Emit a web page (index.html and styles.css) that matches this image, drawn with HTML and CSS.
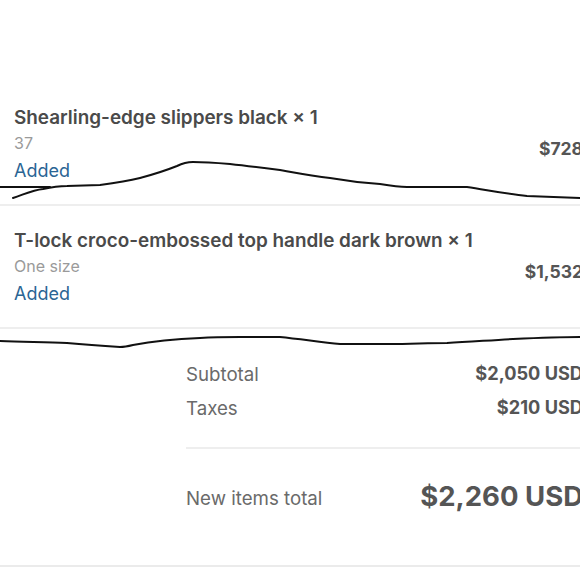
FILE: index.html
```html
<!DOCTYPE html>
<html lang="en">
<head>
<meta charset="utf-8">
<title>New items</title>
<link rel="stylesheet" href="styles.css">
</head>
<body>
<div class="page">
  <div class="items">
    <div class="item">
      <div class="info">
        <div class="title">Shearling-edge slippers black × 1</div>
        <div class="variant">37</div>
        <div class="status">Added</div>
      </div>
      <div class="price">$728</div>
    </div>
    <div class="item">
      <div class="info">
        <div class="title">T-lock croco-embossed top handle dark brown × 1</div>
        <div class="variant">One size</div>
        <div class="status">Added</div>
      </div>
      <div class="price">$1,532</div>
    </div>
  </div>
  <div class="summary">
    <div class="line">
      <span class="label">Subtotal</span>
      <span class="value">$2,050 USD</span>
    </div>
    <div class="line">
      <span class="label">Taxes</span>
      <span class="value">$210 USD</span>
    </div>
    <div class="total">
      <span class="label">New items total</span>
      <span class="grand">$2,260 USD</span>
    </div>
  </div>
  <div class="footer-rule"></div>
  <svg class="scribble" width="580" height="580" viewBox="0 0 580 580" aria-hidden="true">
    <path d="M0 187 L50 187"/>
    <path d="M13 198 C25 194 33 190 43 189 C52 187 60 186 67 186 L100 185 C115 183 128 181 140 178 C155 174 167 170 177 166 C183 163 187 162 193 162 C205 162 218 163 230 164 C248 166 264 168 280 170 C297 173 313 176 330 178 C347 181 365 183 380 184 C392 186 400 187 407 187 L467 187 C487 190 507 194 527 196 L580 198"/>
    <path d="M0 341 C25 342 45 342 67 343 C90 345 105 346 120 347 C125 347 129 346 133 345 C155 341 178 339 200 338 C215 337 228 337 240 337 L280 337 C300 339 320 342 340 344 L390 344 C410 344 428 343 447 343 C470 342 492 340 513 339 C535 338 558 337 580 337"/>
  </svg>
</div>
</body>
</html>
```
FILE: styles.css
```css
html, body {
  margin: 0;
  padding: 0;
  background: #ffffff;
  overflow: hidden;
}

body {
  width: 580px;
  height: 580px;
  font-family: Inter, "Liberation Sans", Arial, sans-serif;
  color: #4a4a4a;
}

.page {
  position: relative;
  width: 583px;
  padding-top: 83px;
}

.item {
  display: flex;
  align-items: center;
  justify-content: space-between;
  padding: 24px 0 22px 14px;
  border-bottom: 2px solid #eeeeee;
}

.info {
  display: flex;
  flex-direction: column;
}

.title {
  font-size: 18.9px;
  font-weight: 600;
  line-height: 22px;
  color: #4a4a4a;
}

.variant {
  margin-top: 4px;
  font-size: 16px;
  line-height: 20px;
  color: #9a9a9a;
}

.status {
  margin-top: 7px;
  font-size: 18px;
  line-height: 22px;
  color: #2a6594;
}

.price {
  margin-top: 7px;
  font-size: 17.5px;
  font-weight: 700;
  color: #555555;
}

.summary {
  margin-left: 186px;
  padding-top: 33px;
}

.line {
  display: flex;
  justify-content: space-between;
  align-items: center;
  height: 24px;
  margin-bottom: 10px;
}

.line .value {
  font-size: 18.2px;
  font-weight: 700;
  color: #555555;
  margin-top: -3px;
}

.label {
  font-size: 18.7px;
  color: #6a6a6a;
}

.total {
  display: flex;
  justify-content: space-between;
  align-items: center;
  margin-top: 27px;
  border-top: 2px solid #eeeeee;
  padding-top: 31px;
  padding-bottom: 49px;
  height: 36px;
}

.grand {
  font-size: 27.5px;
  font-weight: 700;
  color: #555555;
  margin-top: -5px;
}

.footer-rule {
  height: 2px;
  background: #ebebeb;
}

.scribble {
  position: absolute;
  left: 0;
  top: 0;
  pointer-events: none;
  fill: none;
  stroke: #111111;
  stroke-width: 2;
  stroke-linecap: round;
}
```
